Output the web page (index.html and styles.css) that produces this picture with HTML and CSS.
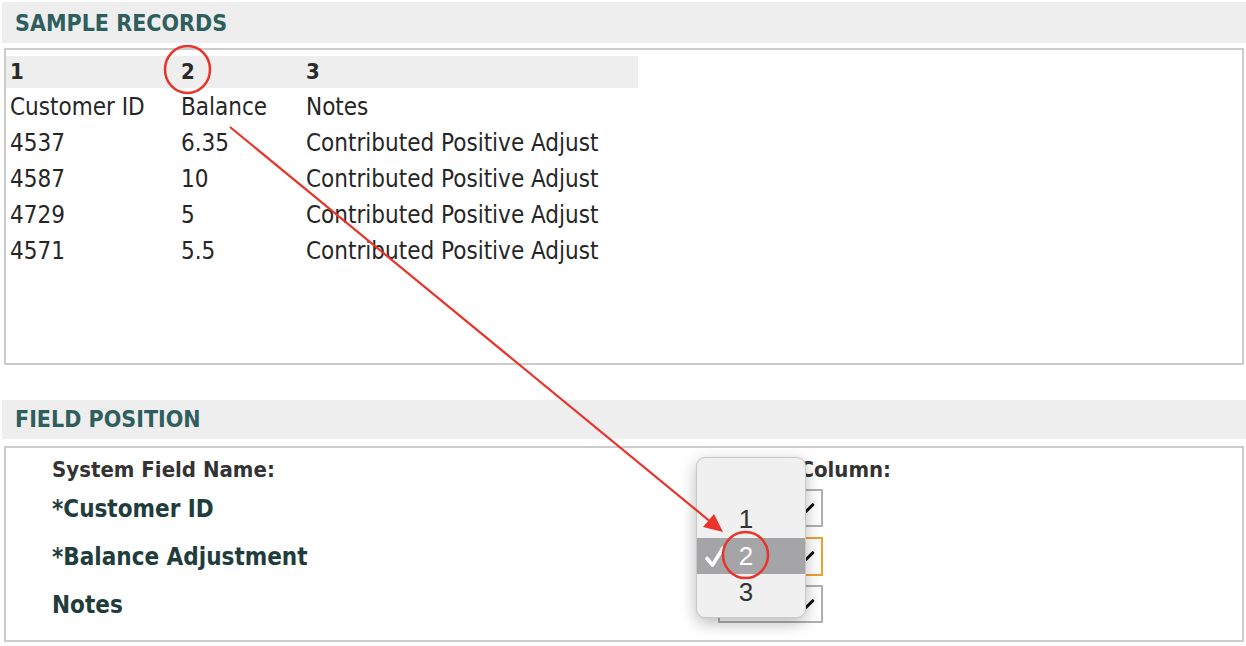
FILE: index.html
```html
<!DOCTYPE html>
<html>
<head>
<meta charset="utf-8">
<link rel="stylesheet" href="styles.css">
</head>
<body>
<div class="page">
  <div class="section-title">SAMPLE RECORDS</div>
  <div class="panel panel-records">
    <table class="records">
      <tr class="head"><td class="c1">1</td><td class="c2">2</td><td class="c3">3</td></tr>
      <tr><td>Customer ID</td><td>Balance</td><td>Notes</td></tr>
      <tr><td>4537</td><td>6.35</td><td>Contributed Positive Adjust</td></tr>
      <tr><td>4587</td><td>10</td><td>Contributed Positive Adjust</td></tr>
      <tr><td>4729</td><td>5</td><td>Contributed Positive Adjust</td></tr>
      <tr><td>4571</td><td>5.5</td><td>Contributed Positive Adjust</td></tr>
    </table>
  </div>

  <div class="section-title second">FIELD POSITION</div>
  <div class="panel panel-fields">
    <div class="grid">
      <div class="col-head">System Field Name:</div>
      <div class="col-head col-right">File Column:</div>
      <div class="field">*Customer ID</div>
      <div class="select"><span class="mark"></span></div>
      <div class="field">*Balance Adjustment</div>
      <div class="select focused"><span class="mark"></span></div>
      <div class="field">Notes</div>
      <div class="select"><span class="mark"></span></div>
    </div>
  </div>

  <div class="popup">
    <div class="opt">1</div>
    <div class="opt selected">
      <svg class="check" width="20" height="22" viewBox="0 0 20 22"><path d="M2 12.5 L7.5 19 L18 2" fill="none" stroke="#ffffff" stroke-width="3.6" stroke-linecap="round" stroke-linejoin="round"/></svg>
      2
    </div>
    <div class="opt">3</div>
  </div>

  <svg class="annot" width="1246" height="646" viewBox="0 0 1246 646">
    <ellipse cx="187.5" cy="69.5" rx="22.5" ry="23.5" fill="none" stroke="#e8342a" stroke-width="2.5"/>
    <line x1="230" y1="127" x2="712" y2="523" stroke="#e8342a" stroke-width="2.2"/>
    <polygon points="723,532 703,527 714,514" fill="#e8342a"/>
    <ellipse cx="745.5" cy="555" rx="22.5" ry="23" fill="none" stroke="#e8342a" stroke-width="2.5"/>
  </svg>
</div>
</body>
</html>
```
FILE: styles.css
```css
html, body {
  margin: 0;
  padding: 0;
  background: #ffffff;
}
.page {
  position: relative;
  width: 1246px;
  height: 646px;
  overflow: hidden;
  font-family: "DejaVu Sans Condensed", "DejaVu Sans", sans-serif;
  color: #222;
}
.section-title {
  margin: 2px 0 0 2px;
  height: 41px;
  line-height: 42px;
  background: #eeeeee;
  padding-left: 13px;
  font-size: 23px;
  font-weight: bold;
  color: #2f5e5e;
}
.section-title.second {
  margin-top: 35px;
  height: 39px;
  line-height: 38px;
}
.panel {
  margin: 5px 2px 0 4px;
  border: 2px solid #cccccc;
  box-sizing: border-box;
}
.panel-records {
  height: 317px;
  padding-top: 6px;
}
.records {
  border-collapse: collapse;
  width: 632px;
  font-size: 24px;
  color: #262626;
}
.records td {
  padding: 2px 0 0 4px;
  height: 34px;
  line-height: 34px;
  white-space: nowrap;
}
.records .head td {
  background: #eeeeee;
  height: 32px;
  padding-top: 0;
  line-height: 32px;
  font-size: 22px;
  font-weight: bold;
  color: #2a2a2a;
}
.records .c1 { width: 167px; }
.records .c2 { width: 121px; }
.panel-fields {
  margin-top: 7px;
  height: 196px;
  padding: 6px 0 0 46px;
}
.grid {
  display: grid;
  grid-template-columns: 666px 105px;
  grid-template-rows: 30px 48px 48px 48px;
  row-gap: 0;
  align-items: center;
}
.col-head {
  font-size: 22px;
  font-weight: bold;
  color: #333;
  white-space: nowrap;
}
.col-right {
  justify-self: start;
  padding-left: 34px;
}
.field {
  font-size: 24px;
  font-weight: bold;
  color: #1f3d3d;
  margin-top: 2px;
}
.select {
  position: relative;
  width: 105px;
  height: 38px;
  box-sizing: border-box;
  border: 2px solid #b0b0b0;
  background: #fff;
}
.select.focused {
  border-color: #eea030;
  height: 39px;
}
.mark {
  position: absolute;
  right: 10px;
  top: 11px;
  width: 3px;
  height: 12px;
  background: #111;
  transform: rotate(45deg);
  border-radius: 1px;
}
.popup {
  position: absolute;
  left: 696px;
  top: 457px;
  width: 110px;
  height: 161px;
  box-sizing: border-box;
  background: #f0f0f0;
  border: 1px solid #c8c8c8;
  border-radius: 9px;
  box-shadow: 0 5px 16px rgba(0, 0, 0, 0.28);
  padding-top: 43px;
  font-family: "Liberation Sans", Arial, sans-serif;
  font-size: 26px;
  color: #333;
}
.opt {
  position: relative;
  height: 36px;
  line-height: 36px;
  text-align: center;
  padding-right: 10px;
}
.opt.selected {
  background: #a5a5a8;
  color: #ffffff;
  margin-top: 1px;
}
.check {
  position: absolute;
  left: 8px;
  top: 8px;
}
.annot {
  position: absolute;
  left: 0;
  top: 0;
  pointer-events: none;
}
```
